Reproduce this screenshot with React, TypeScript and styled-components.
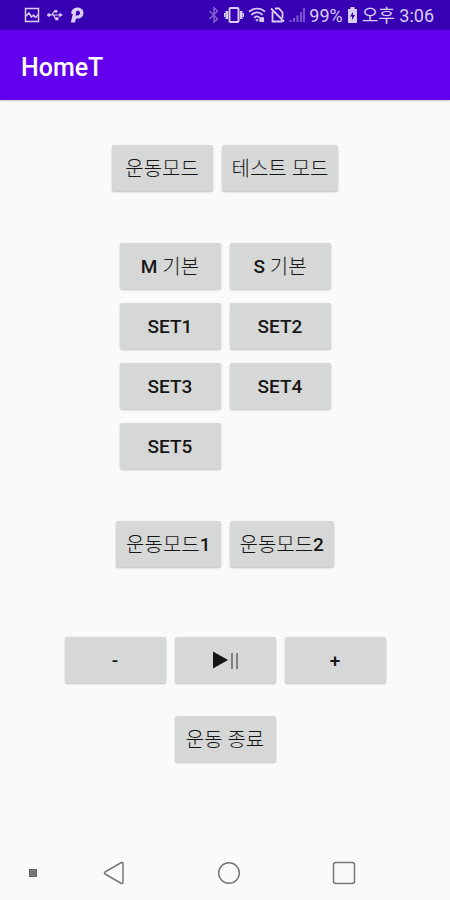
import React from "react";
import styled, { createGlobalStyle } from "styled-components";

const GlobalStyle = createGlobalStyle`
  * { box-sizing: border-box; }
  body {
    margin: 0;
    background: #fafafa;
    font-family: Roboto, "Noto Sans CJK KR", sans-serif;
  }
`;

const Screen = styled.div`
  display: flex;
  flex-direction: column;
  min-height: 100vh;
`;

const StatusBar = styled.div`
  display: flex;
  justify-content: space-between;
  align-items: center;
  height: 30px;
  padding: 0 16px 0 24px;
  background: #3700b3;
  color: #d8cdf3;
  font-size: 18px;
  line-height: 30px;
  white-space: nowrap;
`;

const StatusGroup = styled.div<{ $gap: number }>`
  display: flex;
  align-items: center;
  gap: ${(p) => p.$gap}px;
`;

const StatusText = styled.span`
  padding-top: 1px;
`;

const Icon = styled.svg`
  display: block;
  flex: none;
  fill: none;
  stroke: currentColor;
`;

const AppBar = styled.header`
  display: flex;
  align-items: center;
  height: 70px;
  padding: 6px 21px 0;
  background: #6200ee;
  box-shadow: 0 1px 2px rgba(0, 0, 0, 0.2);
`;

const Title = styled.h1`
  margin: 0;
  color: #fff;
  font-size: 25px;
  line-height: 32px;
  font-weight: 500;
`;

const Content = styled.main`
  flex: 1;
  display: flex;
  flex-direction: column;
  align-items: center;
  padding: 45px 16px 32px;
`;

const ButtonRow = styled.div<{ $after: number }>`
  display: flex;
  justify-content: center;
  gap: 9px;
  margin-bottom: ${(p) => p.$after}px;
`;

const SetGrid = styled.div`
  display: grid;
  grid-template-columns: repeat(2, auto);
  gap: 14px 9px;
  margin-bottom: 52px;
`;

const Button = styled.button`
  display: flex;
  align-items: center;
  justify-content: center;
  min-width: 101px;
  height: 46px;
  padding: 2px 10px 0;
  border: 0;
  border-radius: 2px;
  background: #d6d7d7;
  box-shadow: 0 1px 2px rgba(0, 0, 0, 0.24);
  color: #161616;
  font-family: inherit;
  font-size: 19px;
  line-height: 24px;
  font-weight: 500;
  white-space: nowrap;
  cursor: pointer;
`;

const Hangul = styled.span`
  font-size: 20px;
  font-weight: 300;
  white-space: pre;
`;

const NavBar = styled.nav`
  display: grid;
  grid-template-columns: 65fr 97fr 133fr 98fr 57fr;
  align-items: center;
  height: 54px;
  color: #777;
`;

const NavButton = styled.button`
  display: flex;
  justify-content: center;
  padding: 8px 0;
  border: 0;
  background: none;
  color: inherit;
  cursor: pointer;
`;

const Dot = styled.span`
  width: 8px;
  height: 8px;
  background: #777;
  border: 1px solid #666;
`;

function StatusIcons() {
  return (
    <>
      <StatusGroup $gap={7}>
        <Icon width="16" height="16" viewBox="0 0 16 16" strokeWidth="1.5">
          <rect x="1.5" y="1.5" width="13" height="13" />
          <path d="M2 9l3-3 2.500 4 2-2 2 2.500 3-3" />
        </Icon>
        <Icon width="16" height="16" viewBox="0 0 17 16" strokeWidth="1.300">
          <path d="M2 8h13M5 8l3-4h2M7 8l2 4h2" />
          <circle cx="2" cy="8" r="1.900" fill="currentColor" stroke="none" />
          <circle cx="9.500" cy="4" r="1.700" fill="currentColor" stroke="none" />
          <path d="M13 5.500l4 2.500-4 2.500zM9 10.500h3.200v3.200H9z" fill="currentColor" stroke="none" />
        </Icon>
        <Icon width="14" height="16" viewBox="0 0 14 16">
          <path
            fillRule="evenodd"
            fill="currentColor"
            stroke="none"
            d="M7.500 0.500C11 .500 13.500 2.800 13.500 6S11 11.500 8 11.500H6L5 15.500H.800L2.800 7H1.500C.500 3.500 3.500.500 7.500.500zM6.500 4L5.500 8.500H7.500C9 8.500 10 7.500 10 6S9 3.700 7.800 3.700z"
          />
        </Icon>
      </StatusGroup>
      <StatusGroup $gap={4}>
        <Icon width="12" height="18" viewBox="0 0 12 18" strokeWidth="1.600" opacity="0.45">
          <path d="M1.500 5l8 8L6 16V2l3.500 3-8 8" />
        </Icon>
        <Icon width="20" height="18" viewBox="0 0 20 18">
          <rect x="5.500" y="2" width="9" height="14" rx="1" strokeWidth="2" />
          <path d="M2.800 5v8M17.200 5v8" strokeWidth="2.600" />
          <path d="M.700 7v4M19.300 7v4" strokeWidth="1.400" />
        </Icon>
        <Icon width="18" height="18" viewBox="0 0 19 18" strokeWidth="1.800">
          <path d="M1 5.500c5-4.500 12-4.500 17 0M3.500 8.800c3.500-3.300 8.500-3.300 12 0M6.500 12c2-2 4-2 6 0" />
          <path d="M7.500 13.500l2 2.500 2-2.500zM12 11.500h5v5h-5z" fill="currentColor" stroke="none" />
        </Icon>
        <Icon width="15" height="18" viewBox="0 0 15 18" strokeWidth="1.800">
          <path d="M2.500 5.500V15.500H12.500M12.500 12V6.500L9 2.500H5M1 2.500l13 13" />
        </Icon>
        <Icon width="16" height="18" viewBox="0 0 16 18" strokeWidth="2.200" opacity="0.4">
          <path d="M1.500 16v-2M5 16v-4M8.500 16V9.500M12 16V6M15 16V2" />
        </Icon>
        <StatusText>99%</StatusText>
        <Icon width="11" height="18" viewBox="0 0 11 18">
          <path fillRule="evenodd" d="M3.500 1h4v2H10v14H1V3h2.500zM6 6L3 10.500h2V14l3-5H6z" fill="currentColor" stroke="none" />
        </Icon>
        <StatusText>오후 3:06</StatusText>
      </StatusGroup>
    </>
  );
}

export default function App() {
  return (
    <Screen>
      <GlobalStyle />
      <StatusBar>
        <StatusIcons />
      </StatusBar>
      <AppBar>
        <Title>HomeT</Title>
      </AppBar>
      <Content>
        <ButtonRow $after={52}>
          <Button><Hangul>운동모드</Hangul></Button>
          <Button><Hangul>테스트 모드</Hangul></Button>
        </ButtonRow>
        <SetGrid>
          <Button>M<Hangul> 기본</Hangul></Button>
          <Button>S<Hangul> 기본</Hangul></Button>
          {[1, 2, 3, 4, 5].map((n) => (
            <Button key={n}>SET{n}</Button>
          ))}
        </SetGrid>
        <ButtonRow $after={70}>
          <Button><Hangul>운동모드</Hangul>1</Button>
          <Button><Hangul>운동모드</Hangul>2</Button>
        </ButtonRow>
        <ButtonRow $after={33}>
          <Button>-</Button>
          <Button aria-label="재생/일시정지">
            <Icon width="28" height="20" viewBox="0 0 28 20">
              <path d="M2 .500v17L17 9z" fill="currentColor" stroke="none" />
              <path d="M21 2v16M26 2v16" stroke="#777" strokeWidth="1.800" />
            </Icon>
          </Button>
          <Button>+</Button>
        </ButtonRow>
        <Button><Hangul>운동 종료</Hangul></Button>
      </Content>
      <NavBar>
        <NavButton aria-label="메뉴"><Dot /></NavButton>
        <NavButton aria-label="뒤로">
          <Icon width="22" height="24" viewBox="0 0 22 24" strokeWidth="1.500" strokeLinejoin="round">
            <path d="M18.500 1.500Q20 1 20 3v18q0 2-1.500 1.500L2 13q-1-1 0-2z" />
          </Icon>
        </NavButton>
        <NavButton aria-label="홈">
          <Icon width="24" height="24" viewBox="0 0 24 24" strokeWidth="1.500">
            <circle cx="12" cy="12" r="10.300" />
          </Icon>
        </NavButton>
        <NavButton aria-label="최근 앱">
          <Icon width="24" height="24" viewBox="0 0 24 24" strokeWidth="1.500">
            <rect x="1.500" y="1.500" width="21" height="21" rx="2.500" />
          </Icon>
        </NavButton>
      </NavBar>
    </Screen>
  );
}
